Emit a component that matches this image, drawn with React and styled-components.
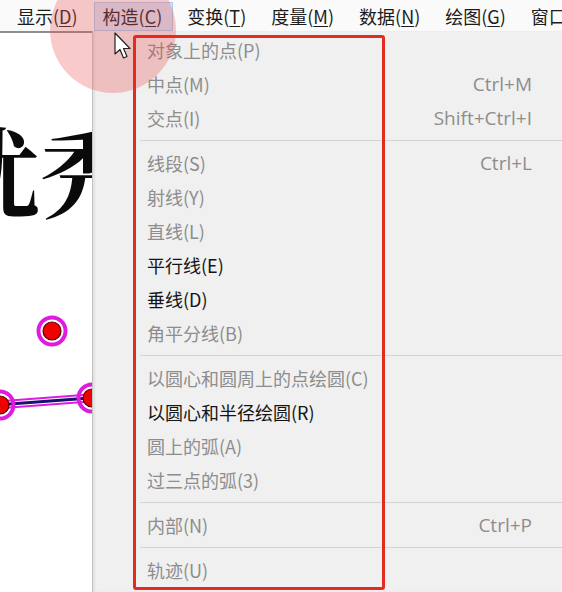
import React from "react";
import styled, { createGlobalStyle } from "styled-components";

const GlobalStyle = createGlobalStyle`
  html, body {
    margin: 0;
    padding: 0;
    overflow: hidden;
    background: #ffffff;
  }
  body {
    font-family: "Noto Sans CJK SC", "Noto Sans", sans-serif;
  }
`;

const menuBar = [
  { label: "显示", key: "D" },
  { label: "构造", key: "C", active: true },
  { label: "变换", key: "T" },
  { label: "度量", key: "M" },
  { label: "数据", key: "N" },
  { label: "绘图", key: "G" },
  { label: "窗口" },
];

// null = separator
const items = [
  { text: "对象上的点(P)" },
  { text: "中点(M)", shortcut: "Ctrl+M" },
  { text: "交点(I)", shortcut: "Shift+Ctrl+I" },
  null,
  { text: "线段(S)", shortcut: "Ctrl+L" },
  { text: "射线(Y)" },
  { text: "直线(L)" },
  { text: "平行线(E)", enabled: true },
  { text: "垂线(D)", enabled: true },
  { text: "角平分线(B)" },
  null,
  { text: "以圆心和圆周上的点绘圆(C)" },
  { text: "以圆心和半径绘圆(R)", enabled: true },
  { text: "圆上的弧(A)" },
  { text: "过三点的弧(3)" },
  null,
  { text: "内部(N)", shortcut: "Ctrl+P" },
  null,
  { text: "轨迹(U)" },
];

export default function App() {
  return (
    <>
      <GlobalStyle />
      <Screen>
        <MenuBar>
          {menuBar.map((m) => (
            <BarItem key={m.label} $active={m.active}>
              {m.label}
              {m.key && (
                <>
                  (<Mnemonic>{m.key}</Mnemonic>)
                </>
              )}
            </BarItem>
          ))}
        </MenuBar>

        <Workspace>
          <Canvas>
            <BigText>优秀</BigText>
            <Drawing width="92" height="560" viewBox="0 0 92 560">
              <circle cx="52" cy="298" r="13.5" fill="none" stroke="#e01be0" strokeWidth="4" />
              <circle cx="52" cy="298" r="9" fill="#f00000" stroke="#5a0000" strokeWidth="1.2" />
              <line x1="-4" y1="372" x2="90" y2="365" stroke="#e01be0" strokeWidth="9" />
              <line x1="-4" y1="372" x2="90" y2="365" stroke="#ffffff" strokeWidth="5" />
              <line x1="-4" y1="372" x2="90" y2="365" stroke="#141470" strokeWidth="3" />
              <circle cx="0" cy="372" r="13.5" fill="none" stroke="#e01be0" strokeWidth="4" />
              <circle cx="0" cy="372" r="9" fill="#f00000" stroke="#5a0000" strokeWidth="1.2" />
              <circle cx="92" cy="365" r="13.5" fill="none" stroke="#e01be0" strokeWidth="4" />
              <circle cx="92" cy="365" r="9" fill="#f00000" stroke="#5a0000" strokeWidth="1.2" />
            </Drawing>
          </Canvas>

          <DropMenu>
            {items.map((it, i) =>
              it ? (
                <MenuRow key={i} $enabled={it.enabled}>
                  <span>{it.text}</span>
                  {it.shortcut && <Shortcut>{it.shortcut}</Shortcut>}
                </MenuRow>
              ) : (
                <Separator key={i} />
              )
            )}
          </DropMenu>
        </Workspace>

        <Spotlight />
        <Cursor width="22" height="30" viewBox="0 0 22 30">
          <path
            d="M1 1 L1 22 L6 17.5 L9.5 26 L13 24.5 L9.5 16.5 L16 16.5 Z"
            fill="#ffffff"
            stroke="#222222"
            strokeWidth="1.2"
            strokeLinejoin="round"
          />
        </Cursor>
        <Annotation />
      </Screen>
    </>
  );
}

const Screen = styled.div`
  position: relative;
  width: 562px;
  height: 592px;
  overflow: hidden;
  display: flex;
  flex-direction: column;
  background: #ffffff;
`;

const MenuBar = styled.div`
  height: 31px;
  flex: none;
  display: flex;
  align-items: stretch;
  gap: 5px;
  padding: 2px 0 0 8px;
  box-sizing: border-box;
  background: #fafafa;
  font-size: 18px;
  color: #1c1c1c;
`;

const BarItem = styled.div`
  display: flex;
  align-items: center;
  padding: 0 10px 2px 8px;
  white-space: nowrap;
  border: 1px solid ${(p) => (p.$active ? "#a9cdee" : "transparent")};
  background: ${(p) => (p.$active ? "#d4e6f8" : "transparent")};
`;

const Mnemonic = styled.span`
  text-decoration: underline;
  text-underline-offset: 2px;
`;

const Workspace = styled.div`
  flex: 1;
  display: flex;
  min-height: 0;
`;

const Canvas = styled.div`
  position: relative;
  width: 92px;
  flex: none;
  background: #ffffff;
  border-top: 2px solid #8e8e8e;
  overflow: hidden;
`;

const BigText = styled.div`
  position: absolute;
  left: -58px;
  top: 86px;
  font-family: "Noto Serif CJK SC", "Noto Sans CJK SC", serif;
  font-size: 98px;
  font-weight: 700;
  line-height: 1;
  color: #0a0a0a;
  white-space: nowrap;
`;

const Drawing = styled.svg`
  position: absolute;
  left: 0;
  top: 0;
`;

const DropMenu = styled.div`
  flex: 1;
  display: flex;
  flex-direction: column;
  padding-top: 2px;
  background: #f0f0f0;
  border-left: 1px solid #c4c4c4;
  box-shadow: inset 2px 0 2px rgba(0, 0, 0, 0.06);
`;

const MenuRow = styled.div`
  height: 34px;
  flex: none;
  display: flex;
  align-items: center;
  justify-content: space-between;
  padding: 0 30px 0 54px;
  font-size: 18px;
  color: ${(p) => (p.$enabled ? "#151515" : "#8d8d8d")};
  white-space: nowrap;
`;

const Shortcut = styled.span`
  font-family: "Open Sans", "Noto Sans", sans-serif;
  font-size: 19px;
  color: #8d8d8d;
`;

const Separator = styled.div`
  height: 11px;
  flex: none;
  display: flex;
  align-items: center;
  padding-left: 47px;

  &::after {
    content: "";
    flex: 1;
    height: 1px;
    background: #d4d4d4;
  }
`;

const Spotlight = styled.div`
  position: absolute;
  left: 50px;
  top: -33px;
  width: 126px;
  height: 126px;
  border-radius: 50%;
  background: rgba(232, 80, 80, 0.3);
  pointer-events: none;
`;

const Cursor = styled.svg`
  position: absolute;
  left: 114px;
  top: 32px;
`;

const Annotation = styled.div`
  position: absolute;
  left: 133px;
  top: 35px;
  width: 252px;
  height: 555px;
  box-sizing: border-box;
  border: 3px solid #e52a22;
  border-radius: 3px;
  pointer-events: none;
`;
